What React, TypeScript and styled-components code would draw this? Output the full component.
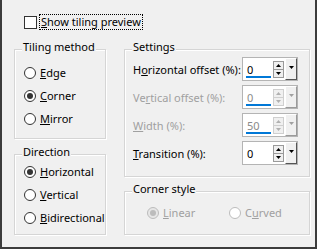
import React from "react";
import styled, { createGlobalStyle } from "styled-components";

const Global = createGlobalStyle`
  html, body { margin: 0; padding: 0; background: #f0f0f0; }
  body { font-family: "Noto Sans", "Open Sans", sans-serif; font-size: 11px; color: #000; }
  u { text-decoration-skip-ink: none; text-underline-offset: 1px; }
`;

const Dialog = styled.div`
  box-sizing: border-box;
  width: 317px;
  height: 249px;
  background: #f0f0f0;
  border-left: 2px solid #3c3c3c;
  border-right: 2px solid #3c3c3c;
  border-bottom: 2px solid #3c3c3c;
  padding: 15px 0 0 12px;
  display: flex;
  flex-direction: column;
`;

const CheckRow = styled.label`
  display: flex;
  align-items: center;
  height: 14px;
  margin-left: 10px;
  gap: 3px;
`;

const CheckBox = styled.span`
  box-sizing: border-box;
  flex-shrink: 0;
  width: 13px;
  height: 13px;
  border: 1px solid #333;
  background: #fff;
`;

const FocusText = styled.span`
  box-sizing: border-box;
  height: 14px;
  line-height: 13px;
  padding: 0 1px;
  outline: 1px dotted #000;
  outline-offset: 0;
`;

const Columns = styled.div`
  display: flex;
  gap: 18px;
  margin-top: 20px;
`;

const Column = styled.div<{ $w: number; $gap: number }>`
  display: flex;
  flex-direction: column;
  width: ${(p) => p.$w}px;
  gap: ${(p) => p.$gap}px;
`;

const Group = styled.section<{ $h: number; $pt: number; $pl: number }>`
  position: relative;
  box-sizing: border-box;
  height: ${(p) => p.$h}px;
  border: 1px solid #d5d5d5;
  box-shadow: inset 1px 1px 0 #fff, 1px 1px 0 #fff;
  padding: ${(p) => p.$pt}px 0 0 ${(p) => p.$pl}px;
`;

const GroupTitle = styled.span`
  position: absolute;
  top: -10px;
  left: 7px;
  padding: 0 1px;
  background: #f0f0f0;
  line-height: 14px;
  white-space: nowrap;
`;

const RadioList = styled.div<{ $row?: boolean }>`
  display: flex;
  flex-direction: ${(p) => (p.$row ? "row" : "column")};
`;

const RadioRow = styled.label<{ $disabled?: boolean; $w?: number }>`
  display: flex;
  align-items: center;
  height: 23px;
  gap: 4px;
  white-space: nowrap;
  color: ${(p) => (p.$disabled ? "#a0a0a0" : "#000")};
  width: ${(p) => (p.$w ? `${p.$w}px` : "auto")};
`;

const RadioCircle = styled.span<{ $checked?: boolean; $disabled?: boolean }>`
  box-sizing: border-box;
  flex-shrink: 0;
  width: 12px;
  height: 12px;
  border-radius: 50%;
  border: 1px solid ${(p) => (p.$disabled ? "#bcbcbc" : "#333")};
  background: ${(p) => (p.$disabled && p.$checked ? "#e6e6e6" : "#fff")};
  display: flex;
  align-items: center;
  justify-content: center;
  &::after {
    content: "";
    display: ${(p) => (p.$checked ? "block" : "none")};
    width: 6px;
    height: 6px;
    border-radius: 50%;
    background: ${(p) => (p.$disabled ? "#bcbcbc" : "#333")};
  }
`;

const SettingRows = styled.div`
  display: flex;
  flex-direction: column;
  gap: 4px;
`;

const SettingRow = styled.div<{ $disabled?: boolean }>`
  display: flex;
  align-items: center;
  height: 24px;
  color: ${(p) => (p.$disabled ? "#a0a0a0" : "#000")};
`;

const SettingLabel = styled.span`
  width: 109px;
  flex-shrink: 0;
  white-space: nowrap;
`;

const Spin = styled.div`
  box-sizing: border-box;
  display: flex;
  align-items: center;
  flex-shrink: 0;
  width: 56px;
  height: 24px;
  border: 1px solid #b4b4b4;
  background: #fff;
`;

const Field = styled.div<{ $disabled?: boolean }>`
  position: relative;
  box-sizing: border-box;
  align-self: stretch;
  width: 31px;
  padding-left: 4px;
  padding-top: 1px;
  display: flex;
  align-items: center;
  color: ${(p) => (p.$disabled ? "#8a8a8a" : "#000")};
`;

const ValueBar = styled.span`
  position: absolute;
  left: 3px;
  right: 2px;
  bottom: 2px;
  height: 2px;
  background: #0078d7;
`;

const Steppers = styled.div`
  display: flex;
  flex-direction: column;
  width: 11px;
`;

const Step = styled.span<{ $disabled?: boolean }>`
  box-sizing: border-box;
  width: 11px;
  height: 9px;
  border: 1px solid ${(p) => (p.$disabled ? "#cfcfcf" : "#9a9a9a")};
  background: #f0f0f0;
  display: flex;
  align-items: center;
  justify-content: center;
  color: ${(p) => (p.$disabled ? "#b0b0b0" : "#000")};
  & + & {
    margin-top: -1px;
  }
`;

const DropButton = styled.span<{ $disabled?: boolean }>`
  box-sizing: border-box;
  align-self: stretch;
  width: 12px;
  margin-left: 1px;
  border-left: 1px solid #fff;
  border-top: 1px solid #fff;
  border-right: 1px solid ${(p) => (p.$disabled ? "#9a9a9a" : "#555")};
  border-bottom: 1px solid ${(p) => (p.$disabled ? "#9a9a9a" : "#555")};
  background: #f0f0f0;
  display: flex;
  justify-content: center;
  padding-top: 7px;
  color: ${(p) => (p.$disabled ? "#a0a0a0" : "#000")};
`;

const Tri = ({ dir }: { dir: "up" | "down" }) => (
  <svg width="5" height="3" viewBox="0 0 5 3">
    <path d={dir === "up" ? "M2.5 0 L5 3 L0 3 Z" : "M0 0 L5 0 L2.5 3 Z"} fill="currentColor" />
  </svg>
);

type SpinProps = { value: string; disabled?: boolean; bar?: boolean };
const SpinBox = ({ value, disabled, bar }: SpinProps) => (
  <Spin>
    <Field $disabled={disabled}>
      {value}
      {bar && <ValueBar />}
    </Field>
    <Steppers>
      <Step $disabled={disabled}>
        <Tri dir="up" />
      </Step>
      <Step $disabled={disabled}>
        <Tri dir="down" />
      </Step>
    </Steppers>
    <DropButton $disabled={disabled}>
      <Tri dir="down" />
    </DropButton>
  </Spin>
);

const Radio = ({
  label,
  checked,
  disabled,
  w,
}: {
  label: React.ReactNode;
  checked?: boolean;
  disabled?: boolean;
  w?: number;
}) => (
  <RadioRow $disabled={disabled} $w={w}>
    <RadioCircle $checked={checked} $disabled={disabled} />
    <span>{label}</span>
  </RadioRow>
);

export default function App() {
  return (
    <>
      <Global />
      <Dialog>
        <CheckRow>
          <CheckBox />
          <FocusText>
            <u>S</u>how tiling preview
          </FocusText>
        </CheckRow>
        <Columns>
          <Column $w={92} $gap={15}>
            <Group $h={90} $pt={11} $pl={9}>
              <GroupTitle>Tiling method</GroupTitle>
              <RadioList>
                <Radio label={<><u>E</u>dge</>} />
                <Radio label={<><u>C</u>orner</>} checked />
                <Radio label={<><u>M</u>irror</>} />
              </RadioList>
            </Group>
            <Group $h={81} $pt={5} $pl={9}>
              <GroupTitle>Direction</GroupTitle>
              <RadioList>
                <Radio label={<><u>H</u>orizontal</>} checked />
                <Radio label={<><u>V</u>ertical</>} />
                <Radio label={<><u>B</u>idirectional</>} />
              </RadioList>
            </Group>
          </Column>
          <Column $w={186} $gap={14}>
            <Group $h={128} $pt={7} $pl={8}>
              <GroupTitle>Settings</GroupTitle>
              <SettingRows>
                <SettingRow>
                  <SettingLabel>H<u>o</u>rizontal offset (%):</SettingLabel>
                  <SpinBox value="0" bar />
                </SettingRow>
                <SettingRow $disabled>
                  <SettingLabel>Ve<u>r</u>tical offset (%):</SettingLabel>
                  <SpinBox value="0" bar disabled />
                </SettingRow>
                <SettingRow $disabled>
                  <SettingLabel><u>W</u>idth (%):</SettingLabel>
                  <SpinBox value="50" bar disabled />
                </SettingRow>
                <SettingRow>
                  <SettingLabel><u>T</u>ransition (%):</SettingLabel>
                  <SpinBox value="0" />
                </SettingRow>
              </SettingRows>
            </Group>
            <Group $h={44} $pt={9} $pl={22}>
              <GroupTitle>Corner style</GroupTitle>
              <RadioList $row>
                <Radio label={<><u>L</u>inear</>} checked disabled w={82} />
                <Radio label={<>C<u>u</u>rved</>} disabled />
              </RadioList>
            </Group>
          </Column>
        </Columns>
      </Dialog>
    </>
  );
}
